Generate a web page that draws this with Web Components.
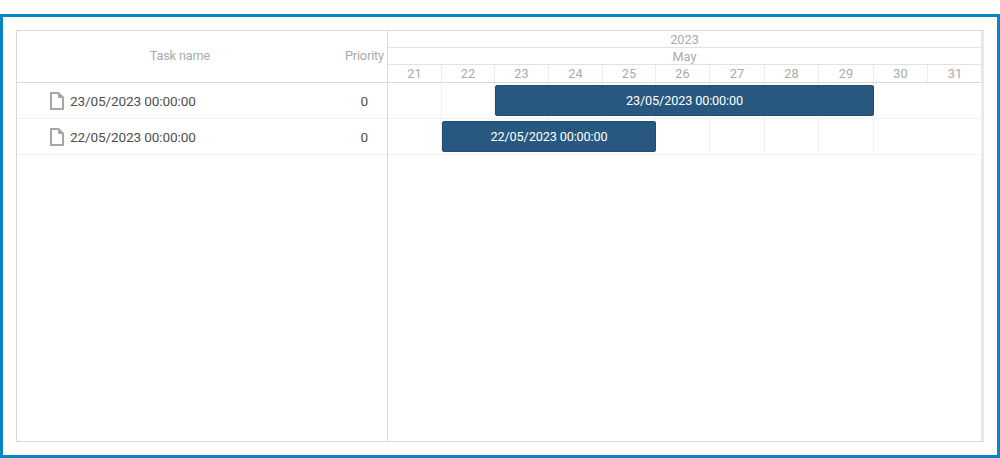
<!DOCTYPE html>
<html>
<head>
<meta charset="utf-8">
<title>Gantt</title>
<style>
  html, body { margin: 0; height: 458px; overflow: hidden; background: #fff; }
  body { font-family: Roboto, "Liberation Sans", sans-serif; }
</style>
</head>
<body>
<gantt-frame>
  <gantt-grid slot="left">
    <task-row name="23/05/2023 00:00:00" priority="0"></task-row>
    <task-row name="22/05/2023 00:00:00" priority="0"></task-row>
  </gantt-grid>
  <gantt-timeline slot="right">
    <time-row from="3" to="10" label="23/05/2023 00:00:00"></time-row>
    <time-row from="2" to="6" label="22/05/2023 00:00:00"></time-row>
  </gantt-timeline>
</gantt-frame>

<script>
const COLS = 'grid-template-columns: 54px 53px 54px 54px 53px 54px 55px 54px 55px 54px 54px;';

class GanttFrame extends HTMLElement {
  constructor() {
    super();
    this.attachShadow({ mode: 'open' });
    this.shadowRoot.innerHTML = `
    <style>
      :host {
        display: block;
        box-sizing: border-box;
        width: 1000px;
        height: 444px;
        margin-top: 14px;
        border: 3px solid #0a84c4;
        padding: 13px 13px 11px 13px;
      }
      #box {
        display: flex;
        box-sizing: border-box;
        height: 412px;
        width: 968px;
        border: 1px solid #d9d9d9;
        border-right: 3px solid #e8e8e8;
      }
      #left { flex: 0 0 370px; border-right: 1px solid #d9d9d9; }
      #right { flex: 1; min-width: 0; }
    </style>
    <div id="box">
      <div id="left"><slot name="left"></slot></div>
      <div id="right"><slot name="right"></slot></div>
    </div>
    `;
  }
}

class GanttGrid extends HTMLElement {
  constructor() {
    super();
    this.attachShadow({ mode: 'open' });
    this.shadowRoot.innerHTML = `
    <style>
      :host { display: block; }
      header {
        display: flex;
        align-items: center;
        height: 51px;
        border-bottom: 1px solid #d9d9d9;
        font-size: 12.7px;
        letter-spacing: -0.13px;
        color: #aaa;
      }
      #name { flex: 1; text-align: center; padding: 0 2px 2px 0; }
      #priority { flex: 0 0 39px; margin-right: 3px; text-align: right; white-space: nowrap; padding-bottom: 2px; }
    </style>
    <header>
      <div id="name">Task name</div>
      <div id="priority">Priority</div>
    </header>
    <slot></slot>
    `;
  }
}

class TaskRow extends HTMLElement {
  constructor() {
    super();
    this.attachShadow({ mode: 'open' });
    this.shadowRoot.innerHTML = `
    <style>
      :host {
        display: flex;
        align-items: center;
        box-sizing: border-box;
        height: 36px;
        border-bottom: 1px solid #f0f0f0;
        font-size: 13.6px;
        letter-spacing: -0.13px;
        color: #4f4f4f;
      }
      svg { margin-left: 33px; margin-right: 6px; flex: none; }
      #name { flex: 1; white-space: nowrap; }
      #priority { flex: 0 0 10px; margin-right: 19px; text-align: right; }
    </style>
    <svg width="14" height="18" viewBox="0 0 14 18">
      <path d="M1 1H8.5L13 5.5V17H1Z" fill="#fff" stroke="#a6a6a6" stroke-width="2"/>
      <path d="M8.5 1.5L12.5 5.5H8.5Z" fill="#a6a6a6" stroke="#a6a6a6" stroke-width="1"/>
    </svg>
    <div id="name">${this.getAttribute('name')}</div>
    <div id="priority">${this.getAttribute('priority')}</div>
    `;
  }
}

class GanttTimeline extends HTMLElement {
  constructor() {
    super();
    this.attachShadow({ mode: 'open' });
    const days = [21, 22, 23, 24, 25, 26, 27, 28, 29, 30, 31];
    this.shadowRoot.innerHTML = `
    <style>
      :host { display: block; font-size: 12.7px; color: #aaa; }
      .band {
        box-sizing: border-box;
        height: 17px;
        line-height: 17px;
        text-align: center;
        border-bottom: 1px solid #e2e2e2;
      }
      #may { line-height: 18px; }
      #days {
        display: grid;
        ${COLS}
        height: 17px;
        border-bottom: 1px solid #d9d9d9;
      }
      #days div {
        line-height: 17px;
        text-align: center;
        border-right: 1px solid #ededed;
      }
      #days div:last-child { border-right: 0; }
    </style>
    <div class="band">2023</div>
    <div class="band" id="may">May</div>
    <div id="days">${days.map(d => `<div>${d}</div>`).join('')}</div>
    <slot></slot>
    `;
  }
}

class TimeRow extends HTMLElement {
  constructor() {
    super();
    this.attachShadow({ mode: 'open' });
    const from = this.getAttribute('from');
    const to = this.getAttribute('to');
    let cells = '';
    for (let i = 1; i <= 11; i++) {
      cells += `<div class="cell" style="grid-column:${i}"></div>`;
    }
    this.shadowRoot.innerHTML = `
    <style>
      :host {
        display: grid;
        ${COLS}
        grid-template-rows: 35px;
        box-sizing: border-box;
        height: 36px;
        border-bottom: 1px solid #f0f0f0;
      }
      .cell { grid-row: 1; border-right: 1px solid #f0f0f0; }
      .cell:nth-child(11) { border-right: 0; }
      #bar {
        grid-row: 1;
        grid-column: ${from} / ${to};
        margin: 2px 0;
        border-radius: 2px;
        box-sizing: border-box;
        border: 1px solid #234e74;
        background: #28587f;
        color: #fff;
        font-size: 12.7px;
        letter-spacing: -0.14px;
        line-height: 29px;
        text-align: center;
        white-space: nowrap;
        overflow: hidden;
      }
    </style>
    ${cells}
    <div id="bar">${this.getAttribute('label')}</div>
    `;
  }
}

customElements.define('gantt-frame', GanttFrame);
customElements.define('gantt-grid', GanttGrid);
customElements.define('task-row', TaskRow);
customElements.define('gantt-timeline', GanttTimeline);
customElements.define('time-row', TimeRow);
</script>
</body>
</html>
